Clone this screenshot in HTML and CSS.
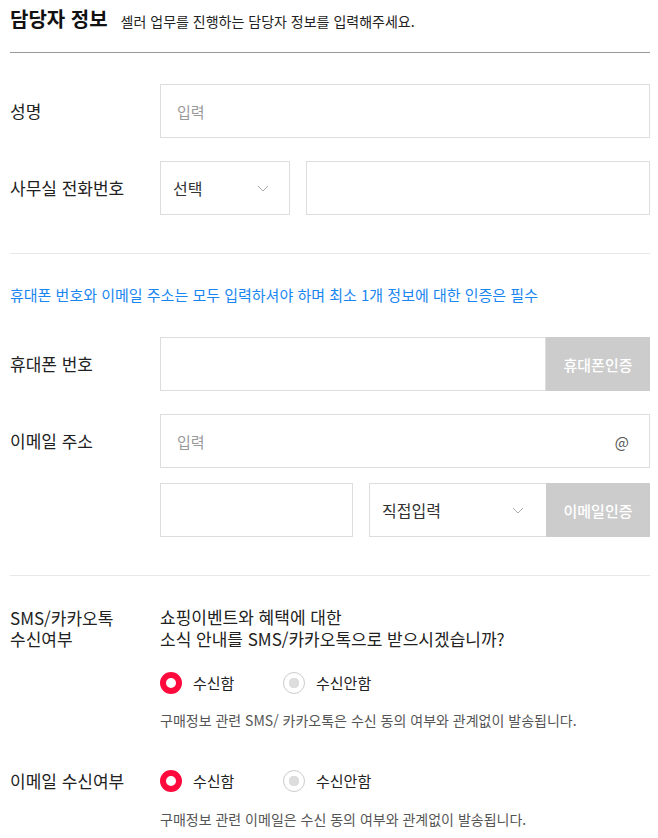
FILE: index.html
```html
<!DOCTYPE html>
<html lang="ko">
<head>
<meta charset="utf-8">
<link rel="stylesheet" href="styles.css">
</head>
<body>
<div class="page">
  <div class="header">
    <h1 class="title">담당자 정보</h1>
    <span class="subtitle">셀러 업무를 진행하는 담당자 정보를 입력해주세요.</span>
  </div>

  <section class="section">
    <div class="row">
      <div class="label">성명</div>
      <div class="field">
        <div class="input"><span class="ph">입력</span></div>
      </div>
    </div>
    <div class="row">
      <div class="label">사무실 전화번호</div>
      <div class="field">
        <div class="select sel-sm"><span>선택</span><svg class="chev" width="12" height="7" viewBox="0 0 12 7"><path d="M1 1l5 5 5-5" fill="none" stroke="#aaa" stroke-width="1"/></svg></div>
        <div class="input grow gap-left"></div>
      </div>
    </div>
  </section>

  <section class="section">
    <p class="notice">휴대폰 번호와 이메일 주소는 모두 입력하셔야 하며 최소 1개 정보에 대한 인증은 필수</p>
    <div class="row">
      <div class="label">휴대폰 번호</div>
      <div class="field">
        <div class="input grow"></div>
        <div class="btn">휴대폰인증</div>
      </div>
    </div>
    <div class="row">
      <div class="label">이메일 주소</div>
      <div class="field">
        <div class="input grow between"><span class="ph">입력</span><span class="at">@</span></div>
      </div>
    </div>
    <div class="row row-tight">
      <div class="label"></div>
      <div class="field">
        <div class="input domain"></div>
        <div class="select sel-lg gap-left"><span>직접입력</span><svg class="chev" width="12" height="7" viewBox="0 0 12 7"><path d="M1 1l5 5 5-5" fill="none" stroke="#aaa" stroke-width="1"/></svg></div>
        <div class="btn">이메일인증</div>
      </div>
    </div>
  </section>

  <section class="section last">
    <div class="opt-row">
      <div class="label top">SMS/카카오톡<br>수신여부</div>
      <div class="opt-body">
        <p class="question">쇼핑이벤트와 혜택에 대한<br>소식 안내를 SMS/카카오톡으로 받으시겠습니까?</p>
        <div class="radios mt-q">
          <label class="radio"><span class="dot on"></span>수신함</label>
          <label class="radio"><span class="dot off"></span>수신안함</label>
        </div>
        <p class="note">구매정보 관련 SMS/ 카카오톡은 수신 동의 여부와 관계없이 발송됩니다.</p>
      </div>
    </div>
    <div class="opt-row email-opt">
      <div class="label mid">이메일 수신여부</div>
      <div class="opt-body">
        <div class="radios">
          <label class="radio"><span class="dot on"></span>수신함</label>
          <label class="radio"><span class="dot off"></span>수신안함</label>
        </div>
        <p class="note note2">구매정보 관련 이메일은 수신 동의 여부와 관계없이 발송됩니다.</p>
      </div>
    </div>
  </section>
</div>
</body>
</html>
```

FILE: styles.css
```css
* { box-sizing: border-box; }
html, body { margin: 0; padding: 0; background: #fff; }
body {
  font-family: "Noto Sans CJK KR", "Noto Sans", sans-serif;
  color: #222;
}
.page { padding: 0 8px 0 10px; }

.header {
  height: 53px;
  display: flex;
  align-items: center;
  padding-bottom: 14px;
  border-bottom: 1px solid #999;
}
.title {
  margin: 0;
  font-size: 20px;
  font-weight: 700;
  color: #111;
  line-height: 26px;
}
.subtitle {
  margin-left: 13px;
  font-size: 14px;
  color: #222;
  line-height: 20px;
  padding-top: 3px;
}

.section {
  padding: 31px 0 38px;
  border-bottom: 1px solid #e8e8e8;
}
.section.last { border-bottom: none; padding-top: 30px; }

.row { display: flex; align-items: center; height: 54px; margin-top: 23px; }
.row:first-child { margin-top: 0; }
.row.row-tight { margin-top: 15px; }
.label { width: 150px; flex: none; font-size: 17px; line-height: 22px; color: #222; }
.label.top { line-height: 21px; padding-top: 1px; }
.field { flex: 1; display: flex; height: 54px; }

.input {
  border: 1px solid #ddd;
  height: 54px;
  padding: 0 16px;
  display: flex;
  align-items: center;
  flex: 1;
  font-size: 15px;
}
.input.between { justify-content: space-between; }
.input.domain { flex: none; width: 193px; }
.gap-left { margin-left: 16px; }
.ph { color: #999; }
.at { color: #555; font-size: 15px; margin-right: 4px; }

.select {
  border: 1px solid #ddd;
  height: 54px;
  padding: 0 20px 0 12px;
  display: flex;
  align-items: center;
  justify-content: space-between;
  font-size: 16px;
  color: #333;
  flex: none;
}
.sel-sm { width: 130px; }
.sel-lg { width: 177px; border-right: none; padding-right: 22px; }
.chev { display: block; }

.btn {
  flex: none;
  width: 104px;
  height: 54px;
  background: #cccccc;
  color: #fff;
  font-size: 15px;
  font-weight: 500;
  display: flex;
  align-items: center;
  justify-content: center;
}

.notice {
  margin: -1px 0 31px;
  font-size: 15px;
  line-height: 22px;
  color: #1a86f0;
}

.opt-row { display: flex; align-items: flex-start; }
.opt-body { flex: 1; }
.question { margin: 0; font-size: 17px; line-height: 22px; color: #222; }
.radios { display: flex; height: 22px; align-items: center; }
.mt-q { margin-top: 22px; }
.radio {
  display: flex;
  align-items: center;
  width: 123px;
  font-size: 15px;
  color: #222;
  line-height: 22px;
}
.dot {
  width: 22px;
  height: 22px;
  border-radius: 50%;
  margin-right: 11px;
  flex: none;
}
.dot.on { border: 6px solid #ff0a3c; background: #fff; }
.dot.off { border: 1px solid #ccc; background: radial-gradient(circle, #ddd 0 5px, #fff 5.5px); }
.note { margin: 16px 0 0; font-size: 14px; line-height: 20px; color: #555; }
.note2 { margin-top: 17px; }
.email-opt { margin-top: 40px; }
.label.mid { line-height: 22px; }
```
